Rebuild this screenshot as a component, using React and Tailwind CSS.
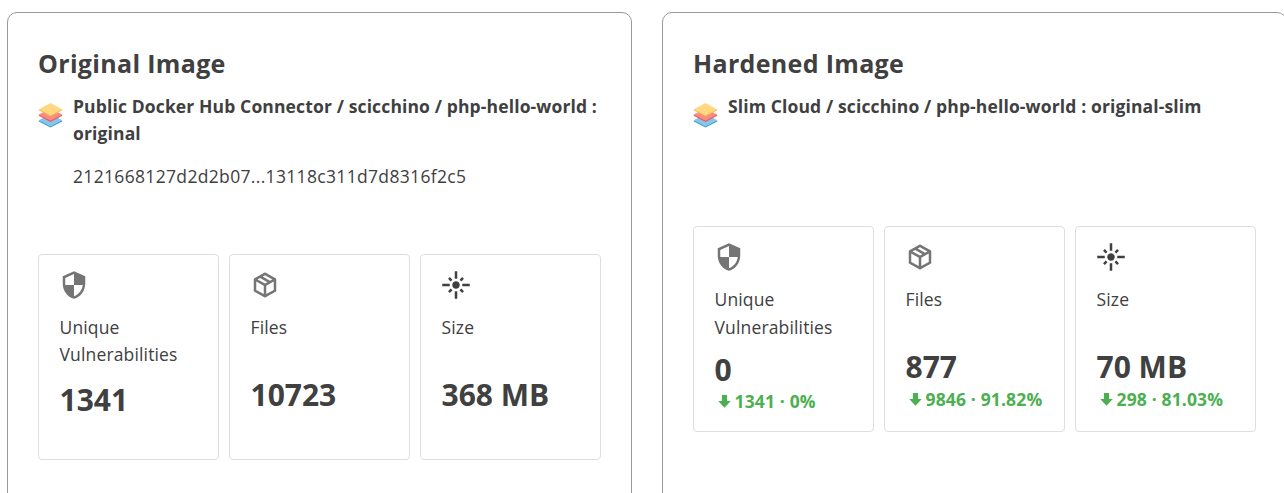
import React from 'react';

function LayersIcon() {
  return (
    <svg className="mt-[21px] h-[27px] w-[25px] shrink-0" viewBox="0 0 25 27">
      <path d="M.8 19.5v1L12.5 26.6 24.2 20.5v-1z" fill="#3d9ec4" />
      <path d="M.8 19.3 12.5 13 24.2 19.3 12.5 25.4z" fill="#88c5ee" />
      <path d="M.8 13.8v1L12.5 21 24.2 14.8v-1z" fill="#dc5f5f" />
      <path d="M.8 13.6 12.5 7.5 24.2 13.6 12.5 19.8z" fill="#ff8a80" />
      <path d="M.8 8.3v1L12.5 15.6 24.2 9.3v-1z" fill="#f0b95c" />
      <path d="M.8 8.2 12.5 2 24.2 8.2 12.5 14.6z" fill="#ffd880" />
    </svg>
  );
}

const ICONS = {
  shield: {
    color: 'text-[#757575]',
    d: 'M12 1L3 5v6c0 5.55 3.84 10.74 9 12 5.16-1.26 9-6.45 9-12V5l-9-4zm0 10.99h7c-.53 4.12-3.28 7.79-7 8.94V12H5V6.3l7-3.11v8.8z',
  },
  box: {
    color: 'text-[#757575]',
    d: 'M21,16.5C21,16.88 20.79,17.21 20.47,17.38L12.57,21.82C12.41,21.94 12.21,22 12,22C11.79,22 11.59,21.94 11.43,21.82L3.53,17.38C3.21,17.21 3,16.88 3,16.5V7.5C3,7.12 3.21,6.79 3.53,6.62L11.43,2.18C11.59,2.06 11.79,2 12,2C12.21,2 12.41,2.06 12.57,2.18L20.47,6.62C20.79,6.79 21,7.12 21,7.5V16.5M12,4.15L10.11,5.22L16,8.61L17.96,7.5L12,4.15M6.04,7.5L12,10.85L13.96,9.75L8.08,6.35L6.04,7.5M5,15.91L11,19.29V12.58L5,9.21V15.91M19,15.91V9.21L13,12.58V19.29L19,15.91Z',
  },
  flare: {
    color: 'text-[#404040]',
    d: 'M7 11H1v2h6v-2zm2.17-3.24L7.05 5.64 5.64 7.05l2.12 2.12 1.41-1.41zM13 1h-2v6h2V1zm5.36 6.05l-1.41-1.41-2.12 2.12 1.41 1.41 2.12-2.12zM17 11v2h6v-2h-6zm-5-2c-1.66 0-3 1.34-3 3s1.34 3 3 3 3-1.34 3-3-1.34-3-3-3zm2.83 7.24l2.12 2.12 1.41-1.41-2.12-2.12-1.41 1.41zm-9.19.71l1.41 1.41 2.12-2.12-1.41-1.41-2.12 2.12zM11 23h2v-6h-2v6z',
  },
};

function Stat({ icon, label, value, delta, tall }) {
  const { color, d } = ICONS[icon];
  const valueOffset = tall ? (delta ? 'mt-[9px]' : 'mt-[10px]') : delta ? 'mt-[6px]' : 'mt-[5px]';
  return (
    <div className="flex h-[206px] flex-col rounded-[4px] border border-[#dedede] pl-[20.5px] pt-[14.5px]">
      <svg className={`-ml-[0.5px] h-[30px] w-[30px] shrink-0 ${color}`} viewBox="0 0 24 24" fill="currentColor">
        <path d={d} />
      </svg>
      <div
        className={`h-[55px] w-[130px] text-[17.5px] tracking-[0.15px] ${delta ? 'mt-[13px] leading-[28px]' : 'mt-[14px] leading-[27px]'}`}
      >
        {label}
      </div>
      <div className={`${valueOffset} text-[30px] font-bold leading-[41px]`}>{value}</div>
      {delta && (
        <div
          className={`${tall ? '-mt-[0.5px]' : 'mt-[0.5px]'} flex items-center text-[17.5px] font-bold leading-[24px] tracking-[0.15px] text-[#4caf50]`}
        >
          <svg className="ml-[3px] mr-[4px] h-[13px] w-[13px]" viewBox="0 0 13 13" fill="currentColor">
            <path d="M3.9 0h5.2v6h3.7L6.5 12.8.2 6h3.7z" />
          </svg>
          <span>{delta}</span>
        </div>
      )}
    </div>
  );
}

function Panel({ title, name, digest, stats, headHeight }) {
  return (
    <section className="h-[560px] w-[625px] shrink-0 rounded-[10px] border border-[#999] px-[30px] pt-[33px]">
      <h2 className="text-[25px] font-bold leading-[34px] tracking-[0.33px]">{title}</h2>
      <div className={`flex ${headHeight}`}>
        <LayersIcon />
        <div className="ml-[10px] pt-[13px]">
          <div className="text-[17.5px] font-bold leading-[27px] tracking-[0.13px]">{name}</div>
          {digest && <div className="mt-[16px] text-[17.5px] leading-[27px] tracking-[0.33px]">{digest}</div>}
        </div>
      </div>
      <div className="grid grid-cols-3 gap-[10px]">
        {stats.map((s) => (
          <Stat key={s.label} {...s} />
        ))}
      </div>
    </section>
  );
}

export default function App() {
  return (
    <main className="flex h-[493px] w-[1284px] gap-[30px] overflow-hidden bg-white pl-[7px] pt-[12px] font-['Open_Sans','Noto_Sans',sans-serif] text-[#404040]">
      <Panel
        title="Original Image"
        name="Public Docker Hub Connector / scicchino / php-hello-world : original"
        digest="2121668127d2d2b07...13118c311d7d8316f2c5"
        headHeight="h-[174px]"
        stats={[
          { icon: 'shield', label: 'Unique Vulnerabilities', value: '1341', tall: true },
          { icon: 'box', label: 'Files', value: '10723' },
          { icon: 'flare', label: 'Size', value: '368 MB' },
        ]}
      />
      <Panel
        title="Hardened Image"
        name="Slim Cloud / scicchino / php-hello-world : original-slim"
        headHeight="h-[146px]"
        stats={[
          { icon: 'shield', label: 'Unique Vulnerabilities', value: '0', delta: '1341 · 0%', tall: true },
          { icon: 'box', label: 'Files', value: '877', delta: '9846 · 91.82%' },
          { icon: 'flare', label: 'Size', value: '70 MB', delta: '298 · 81.03%' },
        ]}
      />
    </main>
  );
}
